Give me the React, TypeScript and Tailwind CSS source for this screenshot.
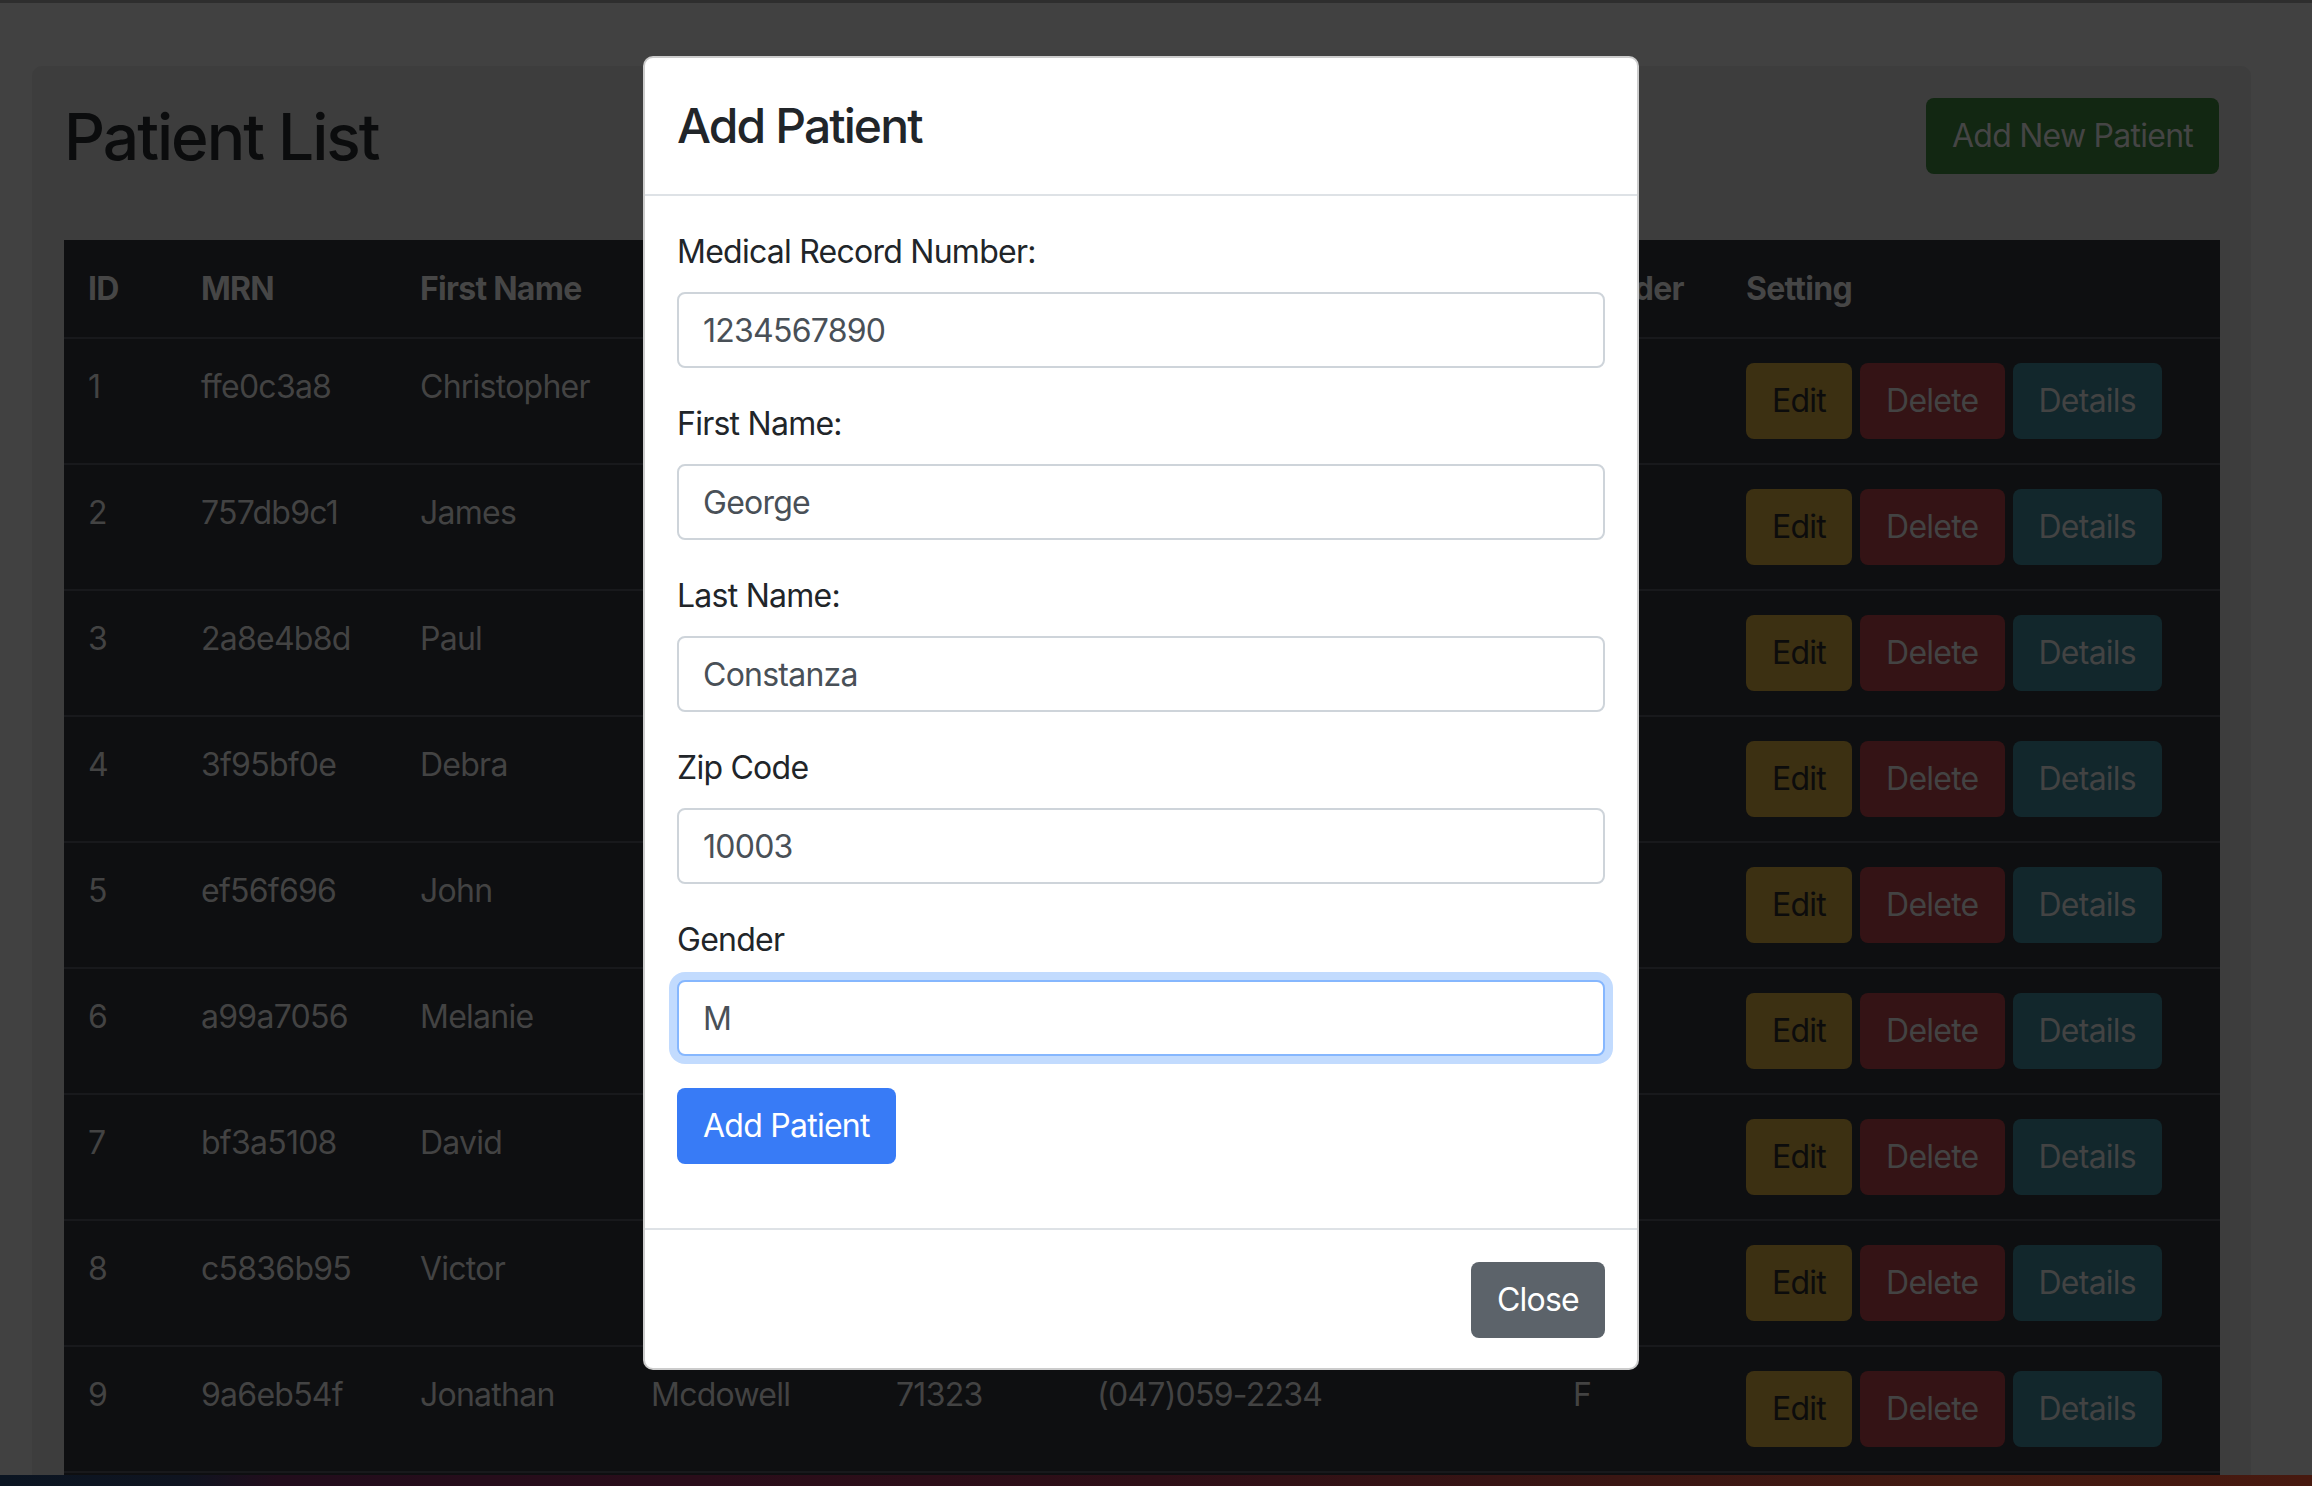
const rows = [
  { id: 1, mrn: "ffe0c3a8", first: "Christopher", last: "Garcia", zip: "10453", phone: "(212)555-0143", gender: "M" },
  { id: 2, mrn: "757db9c1", first: "James", last: "Turner", zip: "60614", phone: "(312)448-9021", gender: "M" },
  { id: 3, mrn: "2a8e4b8d", first: "Paul", last: "Howard", zip: "94110", phone: "(415)772-3390", gender: "M" },
  { id: 4, mrn: "3f95bf0e", first: "Debra", last: "Nguyen", zip: "30303", phone: "(404)118-6627", gender: "F" },
  { id: 5, mrn: "ef56f696", first: "John", last: "Ramirez", zip: "77002", phone: "(713)204-5518", gender: "M" },
  { id: 6, mrn: "a99a7056", first: "Melanie", last: "Brooks", zip: "98101", phone: "(206)391-0472", gender: "F" },
  { id: 7, mrn: "bf3a5108", first: "David", last: "Foster", zip: "02108", phone: "(617)560-8834", gender: "M" },
  { id: 8, mrn: "c5836b95", first: "Victor", last: "Hayes", zip: "85004", phone: "(602)927-1145", gender: "M" },
  { id: 9, mrn: "9a6eb54f", first: "Jonathan", last: "Mcdowell", zip: "71323", phone: "(047)059-2234", gender: "F" },
  { id: 10, mrn: "0d41c7e2", first: "Laura", last: "Patel", zip: "33101", phone: "(305)612-7789", gender: "F" },
];

const fields = [
  { label: "Medical Record Number:", value: "1234567890" },
  { label: "First Name:", value: "George" },
  { label: "Last Name:", value: "Constanza" },
  { label: "Zip Code", value: "10003" },
];

export default function App() {
  return (
    <div className="relative h-[1486px] w-[2312px] overflow-hidden bg-[#414141] font-['Inter','Liberation_Sans',sans-serif] tracking-[-0.75px]">
      <div className="h-[3px] bg-[#2e2e2e]" />

      {/* page under the backdrop */}
      <div className="h-[1472px] overflow-hidden pl-8 pr-[61px] pt-[63px]">
        <div className="rounded-[10px] bg-[#3d3d3d] p-8">
          <div className="flex items-start justify-between">
            <h2 className="text-[64px] font-medium leading-[77px] tracking-[-2px] text-[#0b0c0d]">Patient List</h2>
            <button className="h-[76px] rounded-lg bg-[#122712] px-[26px] text-[32px] leading-[48px] text-[#454545]">
              Add New Patient
            </button>
          </div>

          <table className="mt-[65px] w-full table-fixed border-collapse bg-[#0e0f11] text-left text-[32px] leading-[48px]">
            <colgroup>
              <col className="w-[113px]" />
              <col className="w-[219px]" />
              <col className="w-[231px]" />
              <col className="w-[245px]" />
              <col className="w-[201px]" />
              <col className="w-[476px]" />
              <col className="w-[173px]" />
              <col className="w-[498px]" />
            </colgroup>
            <thead>
              <tr className="border-b-2 border-[#18191c] font-bold text-[#464646]">
                <th className="px-6 pb-6 pt-[25px]">ID</th>
                <th className="px-6 pb-6 pt-[25px]">MRN</th>
                <th className="px-6 pb-6 pt-[25px]">First Name</th>
                <th className="px-6 pb-6 pt-[25px]">Last Name</th>
                <th className="px-6 pb-6 pt-[25px]">Zip Code</th>
                <th className="px-6 pb-6 pt-[25px]">Phone Number</th>
                <th className="px-6 pb-6 pt-[25px]">Gender</th>
                <th className="px-6 pb-6 pt-[25px]">Setting</th>
              </tr>
            </thead>
            <tbody className="text-[#434343]">
              {rows.map((r) => (
                <tr key={r.id} className="border-b-2 border-[#18191c]">
                  <td className="px-6 py-6 align-top">{r.id}</td>
                  <td className="px-6 py-6 align-top">{r.mrn}</td>
                  <td className="px-6 py-6 align-top">{r.first}</td>
                  <td className="px-6 py-6 align-top">{r.last}</td>
                  <td className="px-6 py-6 align-top">{r.zip}</td>
                  <td className="px-6 py-6 align-top">{r.phone}</td>
                  <td className="px-6 py-6 align-top">{r.gender}</td>
                  <td className="px-6 py-6 align-top">
                    <div className="flex gap-2">
                      <button className="h-[76px] rounded-lg bg-[#3c3012] px-[26px] text-[#0c0c0c]">Edit</button>
                      <button className="h-[76px] rounded-lg bg-[#341315] px-[26px] text-[#434343]">Delete</button>
                      <button className="h-[76px] rounded-lg bg-[#12272c] px-[26px] text-[#434343]">Details</button>
                    </div>
                  </td>
                </tr>
              ))}
            </tbody>
          </table>
        </div>
      </div>

      <div className="h-[11px] bg-[linear-gradient(90deg,#0b1522_0%,#0f1420_8%,#220d1c_12%,#2a0d1a_30%,#2e0f17_50%,#3a1613_70%,#421a12_85%,#47190f_100%)]" />

      {/* modal */}
      <div className="absolute left-[643px] top-[56px] w-[996px] rounded-[10px] border-2 border-black/20 bg-white text-[#212529]">
        <div className="border-b-2 border-[#dee2e6] px-8 pb-8 pt-8">
          <h4 className="text-[48px] font-medium leading-[72px] tracking-[-1.9px]">Add Patient</h4>
        </div>
        <div className="p-8">
          <form className="mb-8">
            {fields.map((f) => (
              <div key={f.label} className="mb-8">
                <label className="mb-4 block text-[32px] leading-[48px]">{f.label}</label>
                <input
                  defaultValue={f.value}
                  className="block h-[76px] w-full rounded-lg border-2 border-[#ced4da] bg-white px-6 text-[32px] tracking-[-0.75px] text-[#495057] outline-none"
                />
              </div>
            ))}
            <div className="mb-8">
              <label className="mb-4 block text-[32px] leading-[48px]">Gender</label>
              <input
                defaultValue="M"
                className="block h-[76px] w-full rounded-lg border-2 border-[#86b7fe] bg-white px-6 text-[32px] tracking-[-0.75px] text-[#495057] shadow-[0_0_0_8px_rgba(13,110,253,0.25)] outline-none"
              />
            </div>
            <button type="button" className="h-[76px] rounded-lg bg-[#387bf6] px-[26px] text-[32px] leading-[48px] text-white">
              Add Patient
            </button>
          </form>
        </div>
        <div className="flex justify-end border-t-2 border-[#dee2e6] px-8 pb-[30px] pt-8">
          <button className="h-[76px] rounded-lg bg-[#5c636a] px-[26px] text-[32px] leading-[48px] text-white">Close</button>
        </div>
      </div>
    </div>
  );
}
